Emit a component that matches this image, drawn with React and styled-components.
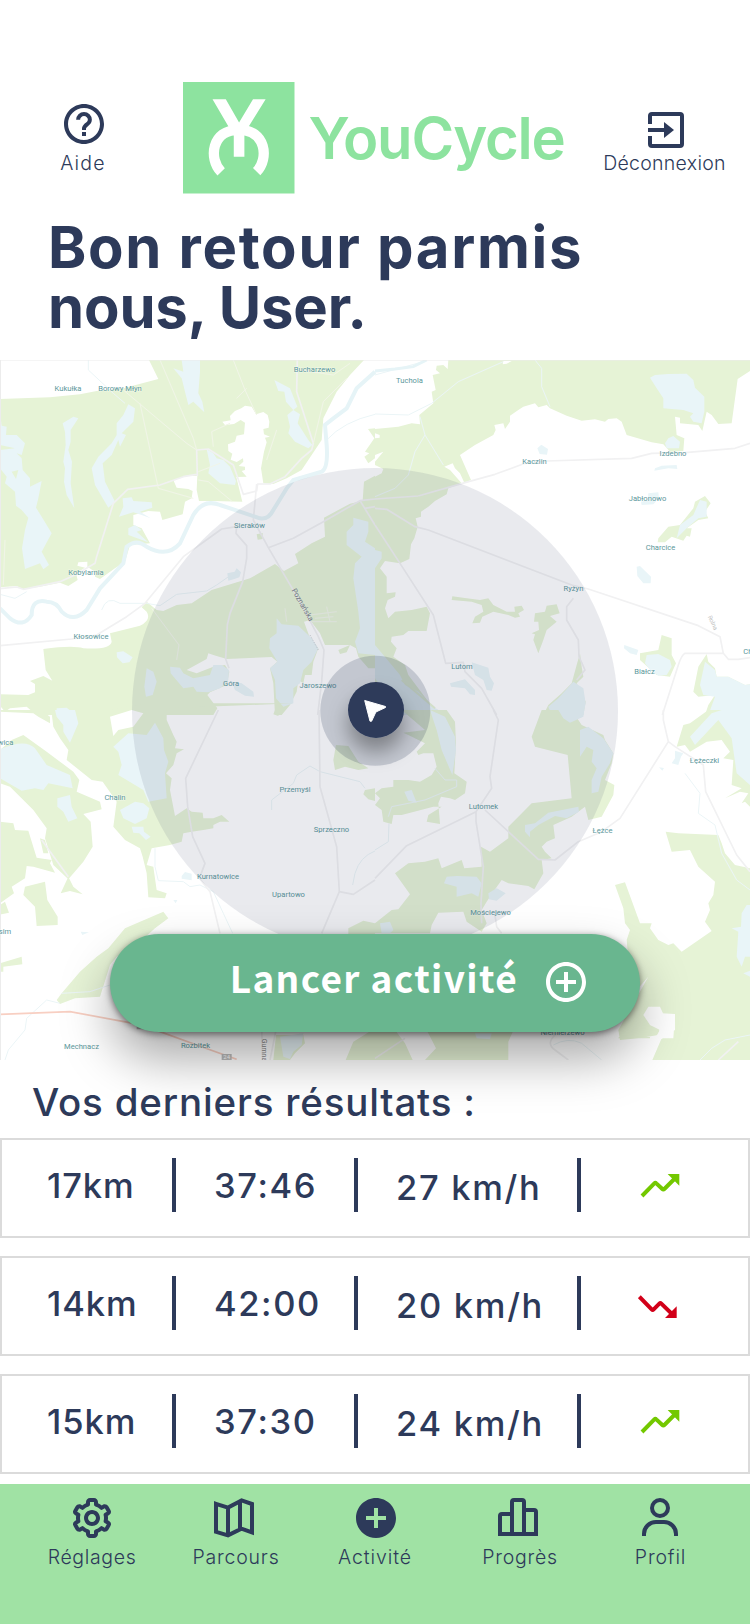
import React from "react";
import styled, { createGlobalStyle } from "styled-components";
import { BiCog, BiHelpCircle, BiPlusCircle, BiSolidPlusCircle } from "react-icons/bi";

const navy = "#2d3a5a";

const GlobalStyle = createGlobalStyle`
  * { box-sizing: border-box; }
  body { margin: 0; background: #fff; color: ${navy}; font-family: Inter, "Liberation Sans", sans-serif; }
`;

const Screen = styled.main`
  width: 750px;
  height: 1624px;
  display: flex;
  flex-direction: column;
  overflow: hidden;
`;

const Header = styled.header`
  display: grid;
  grid-template-columns: 166px 413px 171px;
  height: 194px;
  padding-top: 82px;
`;

const IconButton = styled.button`
  border: 0;
  padding: 0 0 ${(p) => p.$bottom || 0}px;
  background: none;
  color: ${navy};
  font: inherit;
  display: flex;
  flex-direction: column;
  align-items: center;
  justify-content: flex-end;
  gap: 3px;
`;

const IconSlot = styled.span`
  display: flex;
  margin: 0 0 ${(p) => (p.$low ? -6 : 0)}px ${(p) => p.$shift || 0}px;
`;

const Label = styled.span`
  font-size: 19.5px;
  font-weight: 300;
  line-height: 24px;
  letter-spacing: ${(p) => p.$track || 0}px;
  margin-left: ${(p) => p.$shift || 0}px;
  white-space: nowrap;
`;

const Brand = styled.div`
  display: flex;
  align-items: flex-start;
  padding-left: 17px;
  gap: 14px;
`;

const BrandName = styled.span`
  margin-top: 21px;
  color: #8de39f;
  font-size: 58px;
  font-weight: 600;
  line-height: 70px;
  letter-spacing: -1.2px;
`;

const Greeting = styled.h1`
  margin: 23px 0;
  padding-left: 48px;
  font-size: 58px;
  font-weight: 700;
  line-height: 60px;
`;

const GreetingLine = styled.span`
  display: block;
  letter-spacing: ${(p) => p.$track}px;
`;

const MapSection = styled.section`
  position: relative;
  height: 700px;
  flex: none;
`;

const MapCanvas = styled.svg`
  display: block;
  font-family: Roboto, sans-serif;
`;

const StartButton = styled.button`
  position: absolute;
  left: 110px;
  top: 574px;
  width: 530px;
  height: 98px;
  border: 0;
  border-radius: 49px;
  padding: 0 50px 2px 0;
  display: flex;
  align-items: center;
  justify-content: flex-end;
  gap: 24px;
  background: #69b68f;
  color: #fff;
  box-shadow: 0 2px 7px rgba(0, 0, 0, 0.5), 0 26px 50px rgba(0, 0, 0, 0.35);
`;

const StartText = styled.span`
  font-family: "Noto Sans CJK JP", sans-serif;
  font-size: 37px;
  font-weight: 700;
  line-height: 54px;
  letter-spacing: 1.35px;
  margin-top: -10px;
`;

const Results = styled.section`
  display: flex;
  flex-direction: column;
  gap: 18px;
  padding-top: 19px;
  height: 424px;
`;

const ResultsTitle = styled.h2`
  margin: 0 0 -5px;
  padding-left: 32px;
  position: relative;
  font-size: 38.5px;
  font-weight: 500;
  line-height: 46px;
  letter-spacing: 0.82px;
`;

const ResultRow = styled.div`
  height: 100px;
  flex: none;
  border: 2px solid #dbdbdb;
  display: grid;
  grid-template-columns: 170px 182px 223px 1fr;
`;

const Cell = styled.div`
  display: flex;
  padding: ${(p) => p.$top || 25}px 0 0 ${(p) => p.$left}px;
  font-size: 34.5px;
  font-weight: 500;
  line-height: 42px;
  letter-spacing: ${(p) => p.$track || 0}px;
  white-space: nowrap;
  background: ${(p) => (p.$first ? "none" : `linear-gradient(${navy}, ${navy}) 0 18px / 4px 54px no-repeat`)};
`;

const NavBar = styled.nav`
  height: 140px;
  flex: none;
  padding: 10px 19px 0 21px;
  background: #a0e2a4;
  display: grid;
  grid-template-columns: repeat(5, 142px);
  align-items: start;
`;

const Stroke = ({ children }) => (
  <svg width="48" height="48" viewBox="0 0 24 24" fill="none" stroke="currentColor" strokeWidth="2">
    {children}
  </svg>
);

const ExitIcon = () => (
  <Stroke>
    <path d="M4 9V5a1 1 0 0 1 1-1h14a1 1 0 0 1 1 1v14a1 1 0 0 1-1 1H5a1 1 0 0 1-1-1v-4M3 12h9" />
    <path d="M11 8l5 4-5 4z" fill="currentColor" stroke="none" />
  </Stroke>
);

const FoldedMapIcon = () => (
  <Stroke>
    <path d="M3 4.9l6 1.9 6.8-3.6L21 5v14.2l-5.3-1.9L9 20.7l-6-1.8zM9 6.5v14.2M15 3.5v14" />
  </Stroke>
);

const BarsIcon = () => (
  <Stroke>
    <path d="M3 20v-9a1 1 0 0 1 1-1h5M9 20V4a1 1 0 0 1 1-1h4a1 1 0 0 1 1 1v16M15 8h5a1 1 0 0 1 1 1v11M2 20h20" />
  </Stroke>
);

const PersonIcon = () => (
  <Stroke>
    <circle cx="12" cy="7" r="4" />
    <path d="M4 21v-1a6 6 0 0 1 6-6h4a6 6 0 0 1 6 6v1" />
  </Stroke>
);

const TrendIcon = ({ up }) =>
  up ? (
    <svg width="40" height="24" viewBox="0 0 120 72" fill="none">
      <path d="M6 66L43 28Q46 25 49 28L67 45Q70 48 73 45L103 15" stroke="#73c800" strokeWidth="12" />
      <path d="M83 0h35v35z" fill="#73c800" />
    </svg>
  ) : (
    <svg width="40" height="24" viewBox="0 0 120 72" fill="none">
      <path d="M4 5L41 43Q44 46 47 43L64 26Q67 23 70 26L102 57" stroke="#d20019" strokeWidth="12" />
      <path d="M81 69h35V34z" fill="#d20019" />
    </svg>
  );

const BrandMark = () => (
  <svg width="111.5" height="111.5" viewBox="549 66 336 336">
    <path fill="#8de39f" d="M549 66h336v336H549z" />
    <path fill="#fff" d="M638 118h40l40 70 42-70h38l-51 82-13 27v64h-32v-64l-16-27z" />
    <path fill="none" stroke="#fff" strokeWidth="31" d="M664 337C625 297 635 210 717 210S809 297 771 336" />
  </svg>
);

/* Map artwork: each tile is digitised at three units per pixel. */
const Tile = ({ x, y, forest, clearings, water, roads, streams, children }) => (
  <g transform={`translate(${x} ${y}) scale(.33333)`}>
    <path d={forest} fill="#e6f3d6" />
    <path d={clearings} fill="#fff" />
    <path d={water} fill="#e9f5f8" />
    <g fill="none" strokeLinejoin="round">
      <path d={streams} stroke="#ebf5f7" strokeWidth="3" />
      <path d={roads} stroke="#f1f1f2" strokeWidth="5" />
    </g>
    {children}
  </g>
);

const northWest = {
  forest:
    "M0 132L150 127 240 118 290 108 370 100 475 72 447 15 1092 15 1050 60 1010 110 970 190 965 255 935 300 905 345 860 370 820 387 790 385 783 340 792 290 800 262 795 248 810 245 792 238 790 222 806 218 808 200 803 180 790 171 768 178 755 155 735 152 724 160 705 168 690 183 692 196 667 200 675 210 702 207 722 195 735 203 732 238 710 242 705 260 684 268 685 288 697 296 692 314 710 321 729 310 730 320 716 333 735 335 735 345 725 348 740 365 709 366 727 440 640 438 597 438 590 405 592 363 560 362 520 375 530 398 565 402 578 408 575 430 555 440 548 478 487 495 480 470 445 468 400 480 400 510 425 520 450 565 390 570 375 620 345 640 300 672 285 665 285 650 262 635 262 620 235 622 232 632 255 638 228 655 233 675 205 693 180 683 120 695 70 703 50 693 0 697zM130 882Q220 870 250 880Q330 885 335 860L330 835 420 812Q455 795 440 770L425 757 440 740 470 765 490 768 530 750 575 745 635 705 750 670 825 627 852 648 895 625 885 597 935 565 975 545 972 488 1050 446 1088 437 1092 380 1125 362 1125 940 1105 940 1075 905 1068 880 1050 870 975 870 960 835 930 795 912 800 930 850 955 880 940 920 935 960 915 960 910 985 895 975 890 1010 870 1050 845 1080 825 1080 820 985 810 940 832 920 815 906 680 912 640 900 625 895 620 912 560 945 590 955 640 935 675 930 688 950 680 990 630 1012 622 1020 652 1060 640 1080 110 1080 130 1065 95 1068 80 1055 30 1060 15 1070 0 1052 0 1018 85 1020 105 1012 105 987 90 978 130 963 157 977 137 945zM1015 885l35-15-10 22-20 5zM1104 222l21-2v90l-20 15-12-20 15-10-13-5 28-40zM770 538l18-4v18l-15 2z",
  clearings: "M0 0",
  water:
    "M545 15L600 15 600 50 595 115 607 140 613 172 580 140 565 150 555 110 545 70 520 40 550 50zM823 75L870 100 892 155 880 165 900 178 893 205 925 255 937 270 925 280 885 260 865 235 870 215 862 180 880 165 858 140 853 110 835 108zM0 172L5 212 20 215 18 240 50 240 75 265 65 300 50 295 65 310 68 345 90 370 90 395 125 378 115 430 108 458 125 485 155 535 125 590 147 630 130 643 120 625 75 642 66 580 75 525 85 488 65 465 48 452 45 410 15 385 20 365 0 340 0 285 45 280 0 270zM35 350L48 372 55 345zM52 375Q80 350 72 400L55 412zM188 205L220 185 235 190 212 225 212 260 205 285 216 320 212 385 223 460 200 420 192 380 195 340 190 320 197 270 195 230zM385 148L405 160 400 200 365 235 378 240 360 275 355 255 335 300 308 325 315 380 345 440 325 458 285 390 275 340 295 305 335 265 350 240 350 205 370 180zM620 283L640 295 650 310 670 315 690 335 708 378 705 390 660 385 625 355 630 330zM368 430L395 427 400 438 455 442 457 458 420 470 452 490 425 480 400 472 357 485 370 455zM350 892l20-3 28 18-10 15-20 3-17-18zM440 940l20 10 10 30-12 40-20 5-5-30zM510 935L540 938 550 955 580 970 630 960 640 930 665 930 687 945 685 975 660 1000 625 1012 590 1010 580 995 550 1000 512 955zM695 980L725 985 760 1010 762 1025 735 1022 705 1005zM830 790L845 808 895 812 935 850 955 880 935 920 910 945 900 985 880 1000 880 1045 850 1055 828 1030 825 975 810 940 832 920 808 880 810 850 830 835zM1060 488L1105 500 1105 530 1095 560 1125 580V900L1075 895 1065 860 1080 820 1075 770 1060 670 1065 625 1085 605 1040 570 1040 530 1060 510zM170 1080v-20l30-2 28 22zM682 655l22-5 6-10 13 12-5 15-15 5-18 5z",
  roads:
    "M0 701L50 696 70 703 180 680 225 660 285 625 290 605 340 445 383 403 480 390 550 365 590 358M590 285L592 363M590 285L625 282 700 330 730 418 770 408 773 387 810 387 855 365 905 310 935 285 940 265 890 110 892 15M770 387L760 495 805 578 900 740 955 845 972 885 965 980 953 1080M805 578L880 550 970 500 1080 437 1125 432M1080 437L1125 510M1125 455L1095 460M0 872L215 852 290 840 380 785 435 745 550 605 665 522 710 515 708 535 740 572 740 610 728 680 690 775 682 810 677 912 687 940",
  streams:
    "M305 765Q320 720 360 745L440 745 480 752 530 718 620 708 650 690 700 655M1125 178Q1030 200 980 255M0 718L45 730 80 710M265 15V45L340 115 375 145",
};

const northEast = {
  forest:
    "M220 15L1125 15 1125 48 1088 72 1070 205 1030 207 1010 180 995 170 982 228 970 210 915 205 915 188 900 185 905 240 928 250 925 288 885 290 865 268 830 262 755 240 740 200 725 190 700 192 690 200 660 193 620 197 575 182 525 160 515 150 490 157 480 145 445 155 430 165 405 182 405 200 390 222 385 205 358 210 362 225 355 240 300 270 255 300 288 375 268 383 255 355 240 340 233 325 208 335 225 345 260 385 220 400 215 418 180 438 160 455 138 470 138 485 122 490 128 515 118 550 108 568 103 612 75 625 30 618 15 640 35 665 35 715 62 712 60 725 38 735 30 760 40 790 60 770 110 765 155 755 165 775 155 828 100 828 85 840 50 845 48 860 65 880 55 905 90 930 100 960 190 1080 0 1080 0 365 20 355 25 342 0 330 0 320 25 290 0 300 0 250 14 248 14 240 0 235 0 222 70 215 110 205 135 208 133 180 175 145 170 110 182 105 173 60 195 55 183 45 185 32 205 30 218 42zM232 724L275 730 315 735 340 730 355 750 395 770 420 770 418 755 440 752 447 765 430 775 435 785 420 788 400 780 355 770 322 785 315 803 292 805 300 785 325 770 320 750 290 740 230 735zM480 775L510 770 515 752 545 748 554 775 525 783 545 800 515 825 505 855 490 895 475 855 480 838 470 835 492 825 490 800 477 800zM615 895L620 935 625 965 605 985 632 1040 625 1080 505 1080 520 1050 560 1015 590 985 605 930zM850 550L880 515 915 510 955 460 960 440 990 423 1007 445 990 470 1000 490 970 495 935 520 950 520 945 545 935 542 925 557 890 545 870 562 848 562zM860 840L890 850 890 900 903 925 885 965 845 960 795 915 795 895 850 885zM995 897L1000 920 1020 940 1025 965 1060 965 1110 990 1125 988V1080H990L1000 1050 1020 1020 970 1025 955 1010 970 935zM1070 1065l55-20v30l-45 5z",
  clearings: "M385 18h25l-15 8-12 2z",
  water:
    "M0 585L20 590 20 610 0 640zM0 870L75 960 90 990 130 1010 175 1055 215 1080H80L0 970zM840 60L880 57 935 56 955 75 960 98 988 125 988 170 980 205 955 200 945 185 955 175 925 165 890 162 865 160 865 130 845 100 825 68zM880 250L895 243 915 260 912 280 875 280 870 265zM840 340L860 332 905 330 907 342 880 340 838 347zM820 415L850 412 852 430 835 448 800 450 798 440 818 435zM487 280l12-11 20 13-3 17-22-2zM975 435L995 440 995 485 970 490 935 520 905 550 915 510 955 480zM785 635L795 633 828 665 827 685 805 685 787 663zM748 870L790 885 785 900 765 895 747 880zM815 900L850 897 885 915 890 935 875 960 850 962 825 945 810 925zM990 920L1020 945 1025 965 1060 965 1110 990 1125 988V1080H1000L1020 1025 985 1020 975 990zM290 922L340 938 345 965 357 985 350 1007 335 1005 325 975 300 960zM225 985L270 973 300 1005 300 1020 285 1018 270 1000 228 995zM595 980L625 1000 632 1045 625 1080H530L520 1055 550 1030z",
  roads:
    "M0 432L130 423 270 383 360 358 450 325 515 318 770 310 830 295 930 293 1080 280 1125 265M0 460L35 463 120 515 160 525 590 690 640 702 970 812 1035 845 1045 895 1060 913 1090 913 1125 908M1045 895L930 895Q920 900 910 930L862 1080M0 510L75 625 175 780 212 925 265 922 270 950 320 1000 365 1080M595 730L575 755 575 795 610 855 612 905 630 945 605 975",
  streams: "M0 177L100 180 170 145 250 80 385 20M480 15L500 40 500 95 525 155M0 425L60 400 100 360 120 290 150 240 205 330M150 240L135 185M0 60L145 20",
};

const southWest = {
  forest:
    "M0 0H330L440 -20H880L500 -5 500 30 520 75 530 95 525 115 552 118 530 130 520 165 498 190 515 205 510 240 525 318 560 295 575 305 608 308 610 325 640 325 665 315 688 335 660 335 640 345 640 355 610 360 575 365 550 370 545 395 510 405 455 415 440 465 460 470 470 540 500 550 495 565 445 562 440 490 428 440 420 415 375 390 340 350 350 275 308 215 275 210 200 150 205 120 180 85 160 50 155 10 130 5 150 20 150 40 115 20 100 10 0 5zM0 120L35 90 70 75 140 125 180 155 220 185 238 210 230 245 300 275 305 298 250 312 272 335 278 410 250 455 205 508 160 465 135 385 140 355 100 300 30 230 0 220zM0 335L40 340 45 360 85 362 110 443 155 450 150 460 165 488 100 470 80 468 75 505 35 530 42 550 0 580zM120 385L135 390 145 430 130 430zM182 550L205 500 220 530 248 553 210 543zM75 530L135 515 142 570 173 620 173 645 110 648 105 590 70 555zM0 585l15-10 12 33-22 5H0zM0 760L65 740 67 763 10 770 10 785H0zM490 605L505 625 465 655 420 695 350 740 330 765 300 860 225 865 180 882 170 870 185 850 240 785 290 740 325 715 375 655zM1000 150L1008 105 1045 108 1075 155 1105 175 1075 180 1035 170 1005 180zM1095 240l30-5v38l-20-5-15-15zM1045 655L1090 632 1125 640V700H1045zM828 975H910L915 1000 885 1030 870 1050H820zM1060 995L1125 955V1050H1037zM825 0h15l-5 18-15-5z",
  clearings: "M330 20L395 0 430 10 400 50 355 60 340 78z",
  water:
    "M165 0H225L235 40 210 98 190 65 190 45 170 20zM0 118Q75 85 105 115L140 165 210 195 218 235 145 220 130 240 105 235 65 242 0 205zM340 110L385 70 440 75 465 38 490 85 492 120 505 155 495 190 500 265 445 275 430 240 355 195 365 165 355 125zM360 300L405 275 430 280 448 295 440 325 405 342 370 325zM172 265L210 255 215 290 232 325 205 335 190 305 172 290zM395 350L430 350 432 365 452 380 438 390 418 370 400 368zM840 980L910 970 905 1005 880 1025 870 1047 850 1040zM545 498l10-12 20 5v20l-30-5zM520 570h12l-5 10zM242 665l25 2-20 8z",
  roads:
    "M655 0L557 205 563 290 578 380 615 460 598 505 630 545 660 670M957 0L960 230 1010 410 1018 545 1060 553 1125 510M1018 545L965 670M785 950L788 1050M830 950L810 1050M125 390L205 500",
  streams: "M815 300V270L880 220 890 195 930 168 960 185 1080 215 1095 235M1058 525L1065 490Q1080 440 1125 423M465 415L465 470 475 512 550 515 570 530 600 525 640 545 670 610 698 670M15 1050L25 1020 75 960 80 925 140 870 180 880M185 850L270 845 330 825",
};

const southEast = {
  forest:
    "M0 0H215L240 35 243 100 238 190 275 215 270 250 240 270 225 265 198 260 190 280 195 342 155 335 160 315 200 290 175 290 80 315 55 315 50 342 25 335 20 300 0 285 15 265 0 250 20 235 55 230 55 210 100 210 135 215 170 195 185 170 175 130 145 130 130 135 125 125 150 100 100 75 85 68 150 60 80 0zM500 0H590L620 45 685 75 690 90 715 130 710 160 690 210 718 225 715 255 680 320 640 330 630 290 590 320 535 345 540 385 515 395 500 410 510 425 530 445 500 450 505 490 478 538 460 528 400 520 380 510 355 545 335 575 320 600 335 640 320 665 275 635 265 605 190 608 170 645 165 670H0V640L50 600 70 598 105 553 60 490 100 460 150 455 190 445 200 475 260 450 268 475 320 470 318 410 345 425 400 385 400 350 430 320 470 280 590 265 578 135 480 110 470 80zM0 1050H113L90 1000 60 960 0 950zM150 950H420L400 995V1050H150L183 1015zM905 110L925 45 945 40 1000 0H1125V290L1110 275 1100 280 1120 250 1095 245 1050 265 1100 235 1070 225 1075 150 1045 145 1065 125 1040 90 995 95 945 125 930 105zM872 365L910 370 1030 375 1040 400 1050 430 1080 465 1125 475V1050H832L860 985 895 985 900 912 860 910 830 890 805 915 825 945 855 950 850 975 790 985 735 990 730 960 820 800 785 840 760 745 755 690 765 660 750 640 745 595 720 525 750 517 795 640 830 640 825 655 850 690 880 705 895 700 920 725 1010 663 990 635 1005 600 1000 580 1015 555 1020 515 970 470 945 420 890 425zM730 985L825 790V985z",
  clearings: "M805 915L820 890 855 890 865 912 900 912V960L855 990 840 985 855 960 825 945z",
  water:
    "M165 0L210 20 240 80 243 120 232 195 200 120 185 60zM550 0H628L625 20 585 38 565 25zM615 60L640 50 685 85 715 130 705 160 680 200 670 245 650 250 650 210 665 175 650 155 655 120 635 110 615 140zM450 345L480 340 520 308 610 290 612 305 575 325 540 318 490 345 465 365 465 382 450 365zM88 245L110 240 125 278 100 272zM215 500L245 498 305 500 320 520 310 560 290 550 245 560 245 530 207 520zM340 550L365 535 392 550 365 572 342 568zM15 640L45 635 55 660 45 670H20zM300 970H350L345 988 305 985zM945 80L1010 10 1040 0H1125V225L1085 190 1070 85 1030 30 960 105zM1115 585L1100 610 1098 650 1070 655 1090 665 1085 740 1100 770 1110 740 1125 740V585zM1105 790l20-8v18zM900 122L925 130 918 140 910 165 890 160 900 145zM852 172l15 2-5 8z",
  roads:
    "M355 0L370 30 345 200 350 235 320 280 303 305 95 407 0 505M303 305V335L325 470 318 580 320 640M330 300L490 448 540 450 610 395 680 365 735 325 880 95 900 110 985 165 992 245 1085 435 1125 485M880 95L865 30V0M360 615L365 650 380 670M545 970Q510 1000 540 1020L580 1050M1030 1050L1090 995M0 1045L90 985",
  streams: "M180 175L210 210 245 210 245 230 150 270 50 290 40 320M0 420L40 395 42 340M930 190L975 250 970 310 1020 345 1040 430 1085 510 1125 540M975 1050L1010 1015 1050 990 1125 975M535 1005Q580 980 620 1000L680 1050",
};

const places = [
  ["Kukułka", 68, 29], ["Borowy Młyn", 120, 29], ["Bucharzewo", 314.5, 9.5], ["Tuchola", 409.5, 20.5],
  ["Kaczlin", 534.5, 101.5], ["Izdebno", 673, 93.5], ["Jabłonowo", 647.5, 138.5], ["Charcice", 660.5, 188],
  ["Sieraków", 249.5, 165.5], ["Kobylarnia", 86, 212.5], ["Ryżyn", 573.5, 229], ["Kłosowice", 91, 277],
  ["Góra", 231, 324], ["Jaroszewo", 318, 325.5], ["Lutom", 462, 307], ["Białcz", 644.5, 311.5],
  ["Chalin", 115, 438], ["Przemyśl", 295, 429.5], ["Sprzeczno", 331.5, 470], ["Kurnatowice", 218, 516.5],
  ["Upartowo", 288.5, 534.5], ["Lutomek", 483.5, 447], ["Łężeczki", 704.5, 400.5], ["Łężce", 602.5, 471],
  ["Mościejewo", 490.5, 552.5], ["Mechnacz", 81.5, 686.5], ["Rozbitek", 195.5, 686], ["Niemierzewo", 562.5, 672.5],
  ["wica", 5.5, 382.5], ["sim", 5, 572], ["Chrzypsko", 761, 292],
];

const RegionMap = () => (
  <MapCanvas width="750" height="700" viewBox="0 0 750 700">
    <path d="M0 0h750v700H0z" fill="#fff" />
    <Tile x={0} y={-5} {...northWest}>
      <path
        d="M0 760L30 790Q70 820 95 780Q95 730 140 740Q170 740 185 770Q220 805 260 765L300 700 370 625 380 575Q410 550 440 575Q500 610 540 565L580 480Q610 430 660 450L780 490Q805 495 820 465L860 400 880 375 965 350Q985 340 980 270L975 210 1000 190 1040 160 1070 100 1125 50"
        fill="none" stroke="#e6f4f7" strokeWidth="12"
      />
      <path
        d="M480 15L580 250 590 285M700 15L735 105 770 180M370 105L560 265 590 285M420 145L475 400 580 430M640 275L635 230 690 205M660 325L595 350M740 100L710 130M595 375L625 380 697 440M1040 70L970 140 940 265M900 45L1000 60 1050 25M830 225L800 315M15 555L10 690"
        fill="none" stroke="#f1f5e8" strokeWidth="3"
      />
      <path d="M455 760L537 870 530 915M930 780L1010 770M930 800H1010M945 790L1000 785M980 755L990 800M855 760L860 800" fill="none" stroke="#f1f5ea" strokeWidth="3" />
      <path d="M930 840l25 45" fill="none" stroke="#bdbfc2" strokeDasharray="4 4" strokeWidth="2" />
      <path d="M385 520L405 510 425 525 410 530 445 562 385 540zM355 565l90-5" fill="#e9f5f8" />
    </Tile>
    <Tile x={375} y={-5} {...northEast}>
      <path d="M0 48L60 42 115 35 155 15" fill="none" stroke="#e6f4f7" strokeWidth="9" />
      <path d="M80 975L180 1060M130 425L145 460" fill="none" stroke="#e6f3d6" strokeWidth="6" />
    </Tile>
    <Tile x={0} y={350} {...southWest}>
      <path d="M0 913L210 905 400 940 480 965 590 1005 710 1048" fill="none" stroke="#f8cfc2" strokeWidth="5" />
      <path d="M665 1032h30v18h-30zM410 940h30v18h-30z" fill="#bbb" />
      <text x="680" y="1048" fontSize="18" textAnchor="middle" fill="#fff">24</text>
    </Tile>
    <Tile x={375} y={350} {...southEast} />
    <path d="M0 0h750M.5 0v700" stroke="#ececec" fill="none" />
    <g fill="#5b979b" fontSize="7.6" textAnchor="middle" stroke="#fff" strokeOpacity=".45" strokeWidth="1" paintOrder="stroke">
      {places.map(([name, x, y]) => (
        <text key={name} x={x} y={y + 2.4}>{name}</text>
      ))}
    </g>
    <g fontSize="7.4" textAnchor="middle">
      <text transform="translate(300.5 246) rotate(60)" fill="#777d88">Poznańska</text>
      <text transform="translate(711 263.5) rotate(65)" fill="#bbb" fontSize="6">Rolna</text>
      <text transform="translate(261.5 690) rotate(90)" fill="#888" fontSize="7">Gumna</text>
    </g>
    <defs>
      <filter id="pinShadow" x="-100%" y="-100%" width="300%" height="300%">
        <feDropShadow dx="0" dy="14" stdDeviation="10" floodColor="#000" floodOpacity=".35" />
      </filter>
    </defs>
    <circle cx="375" cy="351" r="243" fill={navy} opacity=".105" />
    <circle cx="375.3" cy="350.8" r="55" fill={navy} opacity=".2" />
    <circle cx="376" cy="350" r="28" fill={navy} filter="url(#pinShadow)" />
    <path d="M364.7 340.5L385.5 346.5V347.5L375.9 352 371.6 361.2H370z" fill="#fff" stroke="#fff" strokeLinejoin="round" />
  </MapCanvas>
);

const sessions = [
  { distance: "17km", time: "37:46", speed: "27 km/h", up: true },
  { distance: "14km", time: "42:00", speed: "20 km/h", up: false },
  { distance: "15km", time: "37:30", speed: "24 km/h", up: true },
];

const tabs = [
  { label: "Réglages", track: 0.65, shift: 0, icon: <BiCog size={48} /> },
  { label: "Parcours", track: 0.8, shift: 4, icon: <FoldedMapIcon /> },
  { label: "Activité", track: 0.9, shift: -2, icon: <BiSolidPlusCircle size={48} /> },
  { label: "Progrès", track: 0.75, shift: 4, icon: <BarsIcon /> },
  { label: "Profil", track: 0.85, shift: 1, icon: <PersonIcon /> },
];

export default function App() {
  return (
    <Screen>
      <GlobalStyle />
      <Header>
        <IconButton $bottom={19}>
          <IconSlot $shift={2}><BiHelpCircle size={48} /></IconSlot>
          <Label $track={1.2}>Aide</Label>
        </IconButton>
        <Brand>
          <BrandMark />
          <BrandName>YouCycle</BrandName>
        </Brand>
        <IconButton $bottom={19}>
          <IconSlot $low $shift={3}><ExitIcon /></IconSlot>
          <Label $track={0.28}>Déconnexion</Label>
        </IconButton>
      </Header>
      <Greeting>
        <GreetingLine $track={1.7}>Bon retour parmis</GreetingLine>
        <GreetingLine $track={-0.15}>nous, User.</GreetingLine>
      </Greeting>
      <MapSection>
        <RegionMap />
        <StartButton>
          <StartText>Lancer activité</StartText>
          <BiPlusCircle size={48} />
        </StartButton>
      </MapSection>
      <Results>
        <ResultsTitle>Vos derniers résultats :</ResultsTitle>
        {sessions.map((s) => (
          <ResultRow key={s.distance}>
            <Cell $first $left={45} $track={0.9}>{s.distance}</Cell>
            <Cell $left={42} $track={1.6}>{s.time}</Cell>
            <Cell $left={42} $top={27} $track={1.7}>{s.speed}</Cell>
            <Cell $left={s.up ? 63 : 61} $top={s.up ? 34 : 37}><TrendIcon up={s.up} /></Cell>
          </ResultRow>
        ))}
      </Results>
      <NavBar>
        {tabs.map((t) => (
          <IconButton key={t.label}>
            <IconSlot>{t.icon}</IconSlot>
            <Label $track={t.track} $shift={t.shift}>{t.label}</Label>
          </IconButton>
        ))}
      </NavBar>
    </Screen>
  );
}
